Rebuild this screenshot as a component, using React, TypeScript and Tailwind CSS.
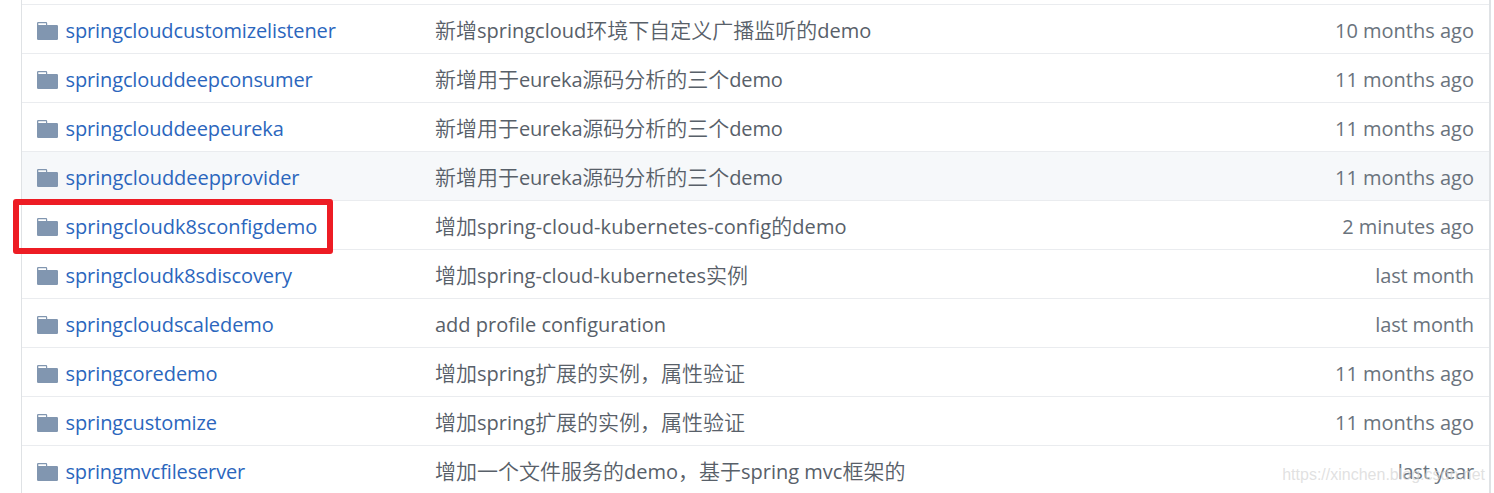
import React from "react";

type Row = {
  name: string;
  nameTracking: string;
  message: string;
  messageTracking?: string;
  age: string;
  ageTracking?: string;
  active?: boolean;
  marked?: boolean;
};

const rows: Row[] = [
  { name: "springcloudcustomizelistener", nameTracking: "tracking-[-0.12px]", message: "新增springcloud环境下自定义广播监听的demo", age: "10 months ago" },
  { name: "springclouddeepconsumer", nameTracking: "tracking-[-0.12px]", message: "新增用于eureka源码分析的三个demo", messageTracking: "tracking-[-0.2px]", age: "11 months ago" },
  { name: "springclouddeepeureka", nameTracking: "tracking-[-0.12px]", message: "新增用于eureka源码分析的三个demo", messageTracking: "tracking-[-0.2px]", age: "11 months ago" },
  { name: "springclouddeepprovider", nameTracking: "tracking-[-0.06px]", message: "新增用于eureka源码分析的三个demo", messageTracking: "tracking-[-0.2px]", age: "11 months ago", active: true },
  { name: "springcloudk8sconfigdemo", nameTracking: "tracking-[0.02px]", message: "增加spring-cloud-kubernetes-config的demo", messageTracking: "tracking-[0.11px]", age: "2 minutes ago", marked: true },
  { name: "springcloudk8sdiscovery", nameTracking: "tracking-[-0.09px]", message: "增加spring-cloud-kubernetes实例", messageTracking: "tracking-[0.05px]", age: "last month", ageTracking: "tracking-[-0.15px]" },
  { name: "springcloudscaledemo", nameTracking: "tracking-[-0.08px]", message: "add profile configuration", age: "last month", ageTracking: "tracking-[-0.15px]" },
  { name: "springcoredemo", nameTracking: "tracking-[-0.09px]", message: "增加spring扩展的实例，属性验证", age: "11 months ago" },
  { name: "springcustomize", nameTracking: "tracking-[-0.09px]", message: "增加spring扩展的实例，属性验证", age: "11 months ago" },
  { name: "springmvcfileserver", nameTracking: "tracking-[-0.16px]", message: "增加一个文件服务的demo，基于spring mvc框架的", age: "last year", ageTracking: "tracking-[-0.25px]" },
];

function FolderIcon() {
  return (
    <svg className="h-[18px] w-[21px] shrink-0" viewBox="0 0 21 18" fill="#8196b0">
      <path
        fillRule="evenodd"
        d="M1.2 0H9a1.2 1.2 0 0 1 1.2 1.2V3h9.6A1.2 1.2 0 0 1 21 4.2v12.6a1.2 1.2 0 0 1-1.2 1.2H1.2A1.2 1.2 0 0 1 0 16.8V1.2A1.2 1.2 0 0 1 1.2 0ZM1.3 1.3V3H9V1.3Z"
      />
    </svg>
  );
}

function Message({ text }: { text: string }) {
  const runs = text.match(/[\x20-\x7e]+|[^\x20-\x7e]+/g) ?? [];
  return (
    <>
      {runs.map((run, i) =>
        /^[\x20-\x7e]/.test(run) ? (
          <span key={i}>{run}</span>
        ) : (
          <span key={i} className="font-['Noto_Sans_CJK_SC',sans-serif] text-[21px] font-[350] tracking-normal">
            {run}
          </span>
        ),
      )}
    </>
  );
}

export default function App() {
  return (
    <div className="h-[493px] w-[1494px] overflow-hidden bg-white pl-[21px] font-['Open_Sans','Noto_Sans_CJK_SC',sans-serif] text-[20px] leading-[48px]">
      <div className="h-[493px] w-[1470px] border-r-2 border-l border-r-[#dfe2e5] border-l-[#dfe2e5] pt-1">
        {rows.map((row) => (
          <div
            key={row.name}
            className={`relative flex h-[49px] items-start border-t border-[#eaecef] pr-[15px] pl-[15px] whitespace-nowrap ${row.active ? "bg-[#f6f8fa]" : ""}`}
          >
            <div className="flex w-[398px] items-start gap-[7.5px]">
              <div className="pt-[17px]">
                <FolderIcon />
              </div>
              <a className={`h-12 pt-[2px] text-[#2b66bd] ${row.nameTracking}`}>{row.name}</a>
            </div>
            <div
              className={`h-12 flex-1 text-[#586069] ${row.messageTracking ?? ""} ${/^[a-z]/.test(row.message) ? "pt-[2px]" : ""}`}
            >
              <Message text={row.message} />
            </div>
            <div className={`h-12 pt-[2px] text-[#6a737d] ${row.ageTracking ?? ""}`}>{row.age}</div>
            {row.marked && (
              <div className="absolute -top-[2px] -left-[9px] z-10 h-[55px] w-[320px] rounded-[3px] border-6 border-[#ed1c24]" />
            )}
            {row.age === "last year" && (
              <div className="absolute top-[17px] right-[4px] font-['Liberation_Sans',Arial,sans-serif] text-[16px] leading-[24px] text-[#d4d4d4]/70">
                https://xinchen.blog.csdn.net
              </div>
            )}
          </div>
        ))}
      </div>
    </div>
  );
}
